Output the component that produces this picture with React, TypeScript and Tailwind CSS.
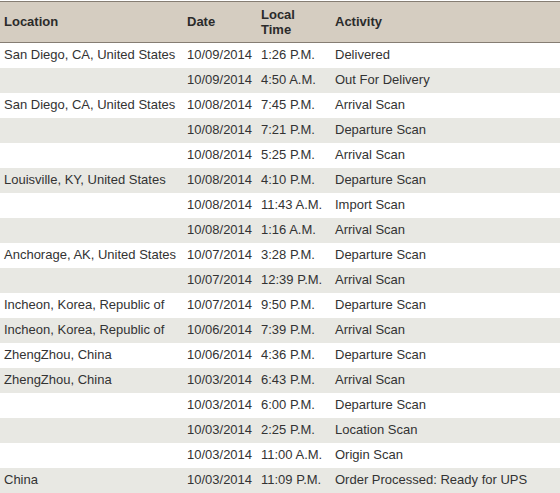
// App.tsx
import React from "react";

type Scan = {
  location: string;
  date: string;
  time: string;
  activity: string;
};

const scans: Scan[] = [
  { location: "San Diego, CA, United States", date: "10/09/2014", time: "1:26 P.M.", activity: "Delivered" },
  { location: "", date: "10/09/2014", time: "4:50 A.M.", activity: "Out For Delivery" },
  { location: "San Diego, CA, United States", date: "10/08/2014", time: "7:45 P.M.", activity: "Arrival Scan" },
  { location: "", date: "10/08/2014", time: "7:21 P.M.", activity: "Departure Scan" },
  { location: "", date: "10/08/2014", time: "5:25 P.M.", activity: "Arrival Scan" },
  { location: "Louisville, KY, United States", date: "10/08/2014", time: "4:10 P.M.", activity: "Departure Scan" },
  { location: "", date: "10/08/2014", time: "11:43 A.M.", activity: "Import Scan" },
  { location: "", date: "10/08/2014", time: "1:16 A.M.", activity: "Arrival Scan" },
  { location: "Anchorage, AK, United States", date: "10/07/2014", time: "3:28 P.M.", activity: "Departure Scan" },
  { location: "", date: "10/07/2014", time: "12:39 P.M.", activity: "Arrival Scan" },
  { location: "Incheon, Korea, Republic of", date: "10/07/2014", time: "9:50 P.M.", activity: "Departure Scan" },
  { location: "Incheon, Korea, Republic of", date: "10/06/2014", time: "7:39 P.M.", activity: "Arrival Scan" },
  { location: "ZhengZhou, China", date: "10/06/2014", time: "4:36 P.M.", activity: "Departure Scan" },
  { location: "ZhengZhou, China", date: "10/03/2014", time: "6:43 P.M.", activity: "Arrival Scan" },
  { location: "", date: "10/03/2014", time: "6:00 P.M.", activity: "Departure Scan" },
  { location: "", date: "10/03/2014", time: "2:25 P.M.", activity: "Location Scan" },
  { location: "", date: "10/03/2014", time: "11:00 A.M.", activity: "Origin Scan" },
  { location: "China", date: "10/03/2014", time: "11:09 P.M.", activity: "Order Processed: Ready for UPS" },
];

const cols = "grid grid-cols-[183px_74px_74px_1fr]";

const App: React.FC = () => {
  return (
    <div className="w-[560px] bg-white pt-px font-['Liberation_Sans',Arial,sans-serif] text-[13px] text-[#333]">
      {/* header */}
      <div className={`${cols} h-[42px] items-center border-t border-b border-[#857d73] bg-[#d5cdc1] pb-px font-bold leading-[15px] text-[#2b2b2b]`}>
        <div className="pl-1">Location</div>
        <div className="pl-1">Date</div>
        <div className="pl-1">
          Local
          <br />
          Time
        </div>
        <div className="pl-1">Activity</div>
      </div>

      {scans.map((scan, index) => (
        <div
          key={index}
          className={`${cols} h-[25px] items-center whitespace-nowrap pb-[2px] ${index % 2 === 1 ? "bg-[#e8e8e3]" : "bg-white"}`}
        >
          <div className="pl-1">{scan.location}</div>
          <div className="pl-1">{scan.date}</div>
          <div className="pl-1">{scan.time}</div>
          <div className="pl-1">{scan.activity}</div>
        </div>
      ))}
    </div>
  );
};

export default App;
